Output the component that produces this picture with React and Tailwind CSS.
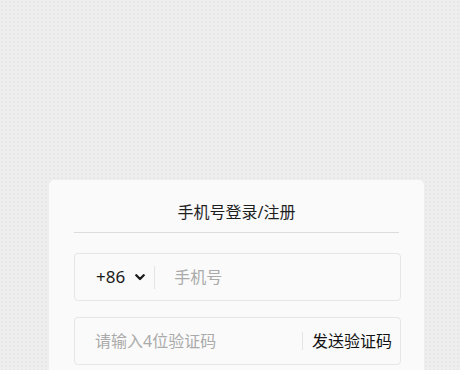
export default function App() {
  return (
    <div className="min-h-[370px] w-full overflow-hidden bg-[#eeeeee] bg-[radial-gradient(#e6e6e6_1px,transparent_1.2px)] bg-[size:4px_4px] font-['Noto_Sans','Noto_Sans_CJK_SC',sans-serif]">
      <div className="pt-[180px] pl-[49px]">
        <div className="w-[375px] min-h-[190px] rounded-t-[5px] bg-[#fafafa] px-[25px]">
          <div className="pt-[20px]">
            <div className="border-b border-[#dcdcdc] pb-[8px] text-center text-[16px] leading-[24px] text-[#1f1f1f]">
              手机号登录/注册
            </div>
          </div>
          <div className="mt-[20px] flex h-[48px] w-[327px] items-center rounded-[4px] border border-[#e6e6e6] bg-[#fafafa] pl-[21px]">
            <span className="text-[17px] leading-[24px] text-[#1a1a1a]">+86</span>
            <svg className="ml-[10px]" width="10" height="7" viewBox="0 0 10 7" fill="none">
              <polyline points="1.3,1.3 5,5 8.7,1.3" stroke="#1a1a1a" strokeWidth="2.3" strokeLinecap="round" strokeLinejoin="round" />
            </svg>
            <div className="ml-[9px] h-[23px] w-px bg-[#e4e4e4]" />
            <input
              className="ml-[19px] min-w-0 flex-1 bg-transparent text-[16px] leading-[24px] text-[#1a1a1a] outline-none placeholder:text-[#aaaaaa]"
              placeholder="手机号"
            />
          </div>
          <div className="mt-[16px] flex h-[48px] w-[327px] items-center rounded-[4px] border border-[#e6e6e6] bg-[#fafafa] pl-[20px] pr-[8px]">
            <input
              className="min-w-0 flex-1 bg-transparent text-[16px] leading-[24px] text-[#1a1a1a] outline-none placeholder:text-[#aaaaaa]"
              placeholder="请输入4位验证码"
            />
            <div className="h-[18px] w-px bg-[#e4e4e4]" />
            <span className="ml-[9px] text-[16px] leading-[24px] text-[#111111]">发送验证码</span>
          </div>
        </div>
      </div>
    </div>
  );
}
